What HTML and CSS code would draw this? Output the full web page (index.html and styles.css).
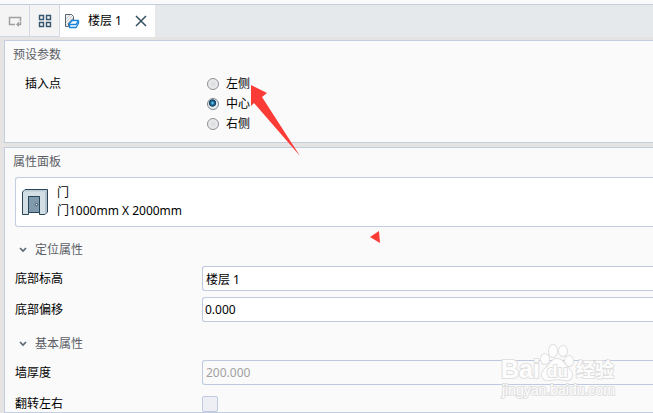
FILE: index.html
```html
<!DOCTYPE html>
<html lang="zh-CN">
<head>
<meta charset="utf-8">
<title>楼层 1</title>
<link rel="stylesheet" href="styles.css">
</head>
<body>
<nav class="tabs">
  <button class="tool" type="button" aria-label="返回">
    <svg width="16" height="16" viewBox="0 0 16 16" fill="none" stroke="#a0a0a0" stroke-width="1.500"><path d="M8 11.500H2.500V4.500H13.500V8"/><path d="M13.500 8.500V11.500H10"/><path d="M12 8.500L9 11.500l3 2.500z" fill="#a0a0a0" stroke="none"/></svg>
  </button>
  <button class="tool" type="button" aria-label="视图">
    <svg width="14" height="14" viewBox="0 0 14 14" fill="none" stroke="#34566f" stroke-width="1.400"><path d="M1.500 1.500h4v4h-4zM8.500 1.500h4v4h-4zM1.500 8.500h4v4h-4zM8.500 8.500h4v4h-4z"/></svg>
  </button>
  <div class="tab">
    <svg width="16" height="16" viewBox="0 0 16 16" fill="none"><path d="M1.500 13.500V1.500H7.500L9.500 3.500V7H7L4.500 10.500V13.500z" fill="#f1f2f3" stroke="#59656e"/><path d="M2 6l4-4M2 9l6-6M2 12l7-7" stroke="#b9bec2" stroke-width=".8"/><path d="M5.500 10.500L8 7.500h6.500V10.500L12 14.500H5.500z" fill="#fff" stroke="#1783dc" stroke-width="1.300" stroke-linejoin="round"/><path d="M5.500 11.500H12l2.500-3.500" stroke="#1783dc" stroke-width="1.300"/></svg>
    <span class="tab-name">楼层 1</span>
    <button class="close" type="button" aria-label="关闭"><svg width="12" height="12" viewBox="0 0 12 12" stroke="#34505f" stroke-width="1.500"><path d="M1 1l10 10M11 1L1 11"/></svg></button>
  </div>
</nav>
<main>
  <section class="panel presets">
    <h2>预设参数</h2>
    <fieldset class="choices">
      <legend>插入点</legend>
      <div class="options">
        <label><input type="radio" name="point">左侧</label>
        <label><input type="radio" name="point" checked>中心</label>
        <label><input type="radio" name="point">右侧</label>
      </div>
    </fieldset>
  </section>
  <section class="panel properties">
    <h2>属性面板</h2>
    <div class="item">
      <svg width="28" height="28" viewBox="0 0 28 28"><path d="M1.500 4L4 1.500H26.500V24L24 26.500H18.500V8.500H7.500V26.500H1.500z" fill="#d3dfe5" stroke="#294659" stroke-linejoin="round"/><path d="M24 4l2-2v21.500l-2 2z" fill="#b3c2cd"/><path d="M3.500 3L4.500 2H25.500L24 3.500H3.500z" fill="#bccad3"/><path d="M7.500 8.500h11v16h-11z" fill="#8199ad" stroke="#294659"/><circle cx="15.500" cy="16.500" r="1.200" fill="#e9f1f5" stroke="#203a4a" stroke-width=".8"/></svg>
      <div><div>门</div><div>门1000mm X 2000mm</div></div>
    </div>
    <h3><svg width="8" height="6" viewBox="0 0 8 6" fill="none" stroke="#596672" stroke-width="1.600"><path d="M1 1l3 3 3-3"/></svg>定位属性</h3>
    <div class="row"><label for="level">底部标高</label><input class="indent" id="level" type="text" value="楼层 1"></div>
    <div class="row"><label for="offset">底部偏移</label><input id="offset" type="text" value="0.000"></div>
    <h3><svg width="8" height="6" viewBox="0 0 8 6" fill="none" stroke="#596672" stroke-width="1.600"><path d="M1 1l3 3 3-3"/></svg>基本属性</h3>
    <div class="row"><label for="wall">墙厚度</label><input class="indent" id="wall" type="text" value="200.000" disabled></div>
    <div class="row"><label for="flip">翻转左右</label><input id="flip" type="checkbox"></div>
  </section>
</main>
<svg class="arrow" width="50" height="74" viewBox="0 0 50 74" aria-hidden="true"><path d="M1 1L17 9L12 13L50 72L4 19L1 22z" fill="#fb3b35"/></svg>
<svg class="marker" width="10" height="12" viewBox="0 0 10 12" aria-hidden="true"><path d="M0 6L9 0L10 12z" fill="#fb3b35"/></svg>
<svg class="watermark" width="126" height="60" viewBox="0 0 126 60" aria-hidden="true">
  <g fill="#fdfdfd" stroke="#e0e0e0" stroke-width="2" paint-order="stroke" stroke-linejoin="round">
    <text class="brand" x="1" y="37">Bai</text>
    <ellipse cx="45" cy="18" rx="4" ry="5"/><ellipse cx="53" cy="10" rx="4" ry="6"/><ellipse cx="63" cy="10" rx="4" ry="5"/><ellipse cx="69" cy="20" rx="4" ry="5"/>
    <path d="M57 18c5 0 7 4 10 8 3 3 6 5 5 9s-4 5-8 4-10-1-14 0-8-1-8-5 3-6 6-9 4-7 9-7z"/>
    <text class="du" x="47" y="36">du</text>
    <text class="brand-cn" x="76" y="36">经验</text>
    <text class="address" x="2" y="54">jingyan.baidu.com</text>
  </g>
</svg>
</body>
</html>
```

FILE: styles.css
```css
* { box-sizing: border-box; }
html { height: 100%; overflow: hidden; }
body {
  position: relative;
  display: flex;
  flex-direction: column;
  height: 100%;
  margin: 0;
  padding-top: 4px;
  overflow: hidden;
  background: #fafafa;
  color: #000;
  font: 12px/18px "Noto Sans", "Noto Sans CJK SC", sans-serif;
}
h2, h3 { margin: 0; font-size: 12px; font-weight: 400; color: #5b5e66; }
button { padding: 0; border: 0; background: none; }
svg { display: block; flex: none; }

.tabs {
  display: flex;
  flex: none;
  height: 33px;
  border-top: 1px solid #c5cee1;
  background: #e5e9eb;
}
.tool {
  display: grid;
  place-items: center;
  width: 30px;
  border: 1px solid #d2d8e6;
  border-left: 0;
  border-top: 0;
  background: #f4f4f4;
}
.tab {
  display: flex;
  align-items: center;
  padding: 0 8px 0 4px;
  background: #fff;
}
.tab-name { margin: 0 13px 0 8px; }

main {
  display: flex;
  flex: 1;
  flex-direction: column;
  gap: 4px;
  min-height: 0;
  padding: 3px 0 0 4px;
  background: #e6e3e3;
}
.panel {
  border: 1px solid #c3cde0;
  border-right: 0;
  background: #fafafa;
}
.presets { flex: none; padding: 5px 0 8px 8px; }
.choices {
  display: flex;
  margin: 10px 0 0 12px;
  padding: 0;
  border: 0;
  line-height: 20px;
}
.choices legend { float: left; width: 182px; padding: 0; }
.options { display: flex; flex-direction: column; }
.options label { display: flex; align-items: center; gap: 7px; }
input[type="radio"] {
  appearance: none;
  width: 12px;
  height: 12px;
  margin: 0;
  border: 1px solid #8c8f93;
  border-radius: 50%;
  background: radial-gradient(circle, #d9dcdf, #f4f4f4);
}
input[type="radio"]:checked {
  border-color: #7c868e;
  background: radial-gradient(circle at 45% 40%, #7bd7f6 0, #176b9c 24%, #123c5c 40%, #e6edf1 50%);
}

.properties { flex: 1; min-height: 0; padding: 5px 0 0 10px; }
.properties h2 { margin-left: -2px; }
.item {
  display: flex;
  align-items: center;
  gap: 8px;
  height: 50px;
  margin-top: 6px;
  padding-left: 5px;
  border: 1px solid #c3cde0;
  border-right: 0;
  border-radius: 3px 0 0 3px;
  background: #fff;
}
.properties h3 {
  display: flex;
  align-items: center;
  gap: 8px;
  height: 32px;
  margin: 7px 0 0 4px;
}
.row {
  display: flex;
  align-items: center;
  height: 25px;
  margin-bottom: 6px;
}
.row label { flex: none; width: 187px; }
.row input[type="text"] {
  flex: 1;
  min-width: 0;
  height: 25px;
  padding: 0 2px;
  border: 1px solid #bfcae0;
  border-right: 0;
  border-radius: 3px 0 0 3px;
  background: #fff;
  color: #000;
  font: inherit;
}
.row input.indent { padding-left: 3px; }
.row input[type="text"]:disabled { background: #fafafa; color: #a2a2a2; }
.properties h3 ~ h3 { margin-top: 1px; }
input[type="checkbox"] {
  appearance: none;
  width: 16px;
  height: 16px;
  margin: 0;
  border: 1px solid #bfcae0;
  border-radius: 2px;
  background: #eeeff4;
}

.arrow { position: absolute; left: 250px; top: 84px; }
.marker { position: absolute; left: 370px; top: 231px; }
.watermark { position: absolute; left: 500px; top: 341px; pointer-events: none; }
.brand { font: 700 25px "Liberation Sans", sans-serif; }
.du { font: 700 17px "Liberation Sans", sans-serif; }
.brand-cn { font: 700 19px "Noto Sans CJK SC", sans-serif; }
.address { font: 14px "Liberation Sans", sans-serif; }
```
